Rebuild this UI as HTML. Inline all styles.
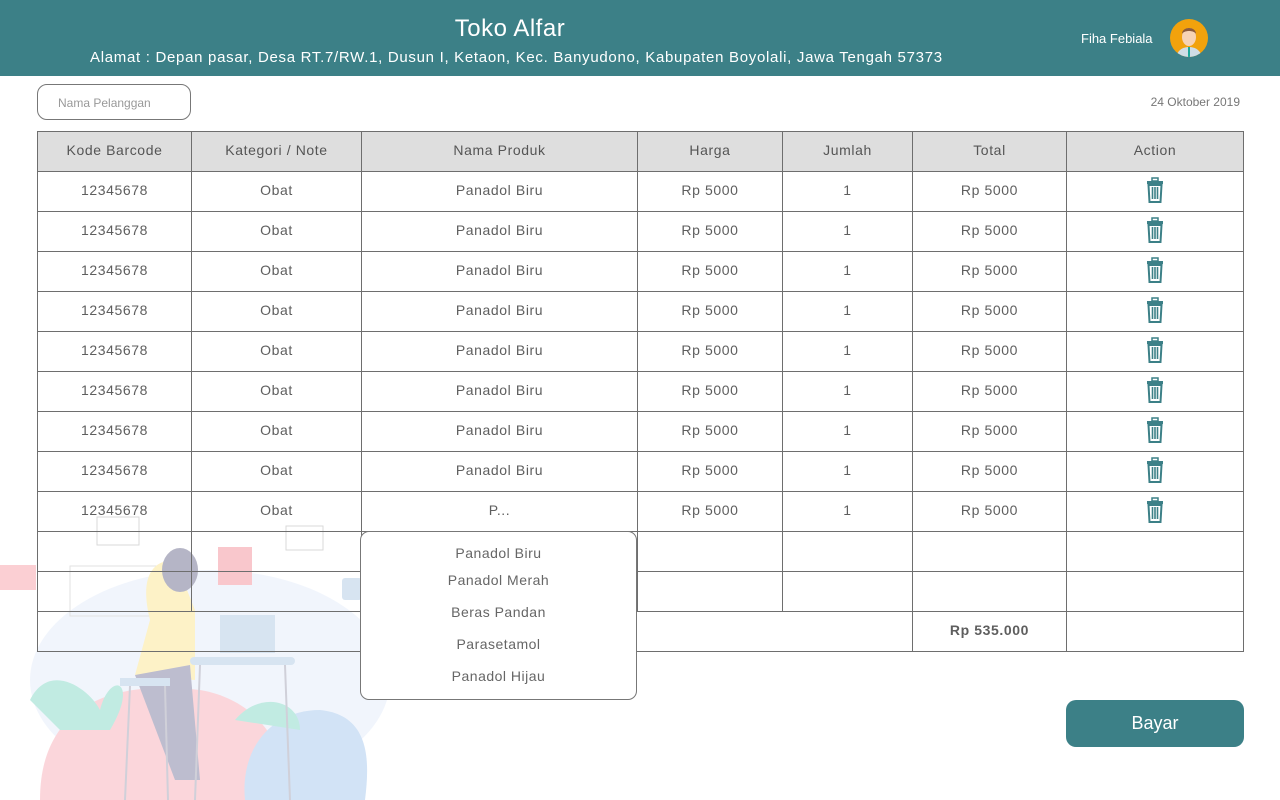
<!DOCTYPE html>
<html><head><meta charset="utf-8"><style>
*{margin:0;padding:0;box-sizing:border-box}
body{width:1280px;height:800px;position:relative;overflow:hidden;background:#fff;font-family:"Liberation Sans",sans-serif;color:#555}
.hdr{position:absolute;left:0;top:0;width:1280px;height:76px;background:#3c8087;color:#fff}
.t{position:absolute;left:0;width:1020px;text-align:center;top:15px;font-size:24px;letter-spacing:0.5px}
.a{position:absolute;left:90px;top:49px;font-size:15px;letter-spacing:0.7px}
.u{position:absolute;left:1081px;top:31px;font-size:13px}
.av{position:absolute;left:1170px;top:19px;width:38px;height:38px;border-radius:50%;background:#f2a20c;overflow:hidden}
.inp{position:absolute;left:37px;top:84px;width:154px;height:36px;border:1px solid #777;border-radius:10px;font-size:12px;color:#999;padding:11px 20px}
.date{position:absolute;right:40px;top:95px;font-size:12px;color:#777}
.c{position:absolute;border:1px solid #6e6e6e;font-size:14px;text-align:center;display:flex;align-items:center;justify-content:center;color:#5e5e5e;letter-spacing:0.6px;padding-bottom:3px}
.h{background:#dedede;color:#555}
.dd{position:absolute;left:360px;top:531px;width:277px;height:169px;border:1px solid #777;border-radius:9px;background:#fff;font-size:14px;color:#666;text-align:center;letter-spacing:0.5px}
.dd div{position:absolute;width:100%}
.bay{position:absolute;left:1066px;top:700px;width:178px;height:47px;border-radius:10px;background:#3c8087;color:#fff;font-size:18px;text-align:center;line-height:47px}
</style></head><body>
<svg style="position:absolute;left:0;top:500px" width="400" height="300" opacity="0.55">
<ellipse cx="210" cy="180" rx="180" ry="110" fill="#e6eefb"/>
<path d="M40 300 C40 200 120 180 200 190 C260 200 290 250 285 300Z" fill="#f9b6be"/>
<path d="M245 300 C240 250 270 210 320 210 C370 215 370 260 365 300Z" fill="#aecdf0"/>
<path d="M30 200 C50 160 90 190 100 210 C110 170 140 180 110 230 L60 230Z" fill="#8fdccc"/>
<path d="M235 220 C260 190 300 200 300 230Z" fill="#8fdccc"/>
<rect x="0" y="65" width="36" height="25" fill="#f9a8b0"/>
<rect x="218" y="47" width="34" height="38" fill="#f59aa4"/>
<rect x="286" y="26" width="37" height="24" fill="none" stroke="#bbb"/>
<rect x="97" y="17" width="42" height="28" fill="none" stroke="#bbb"/>
<rect x="70" y="66" width="90" height="50" fill="none" stroke="#ccc"/>
<path d="M150 120 C140 80 150 60 175 60 L195 110 L195 180 L135 175Z" fill="#fde99a"/>
<path d="M135 175 L190 165 L200 280 L175 280Z" fill="#8888a8"/>
<ellipse cx="180" cy="70" rx="18" ry="22" fill="#7a7a98"/>
<rect x="220" y="115" width="55" height="38" fill="#b8cfe6"/>
<rect x="190" y="157" width="105" height="8" rx="4" fill="#b8cfe6"/>
<rect x="120" y="178" width="50" height="8" fill="#b8cfe6"/>
<path d="M200 165 L195 300 M285 165 L290 300 M130 186 L125 300 M165 186 L168 300" stroke="#aab" stroke-width="2"/>
<rect x="342" y="78" width="20" height="22" rx="3" fill="#b8cfe6"/>
</svg>
<div class="hdr"><div class="t">Toko Alfar</div><div class="a">Alamat : Depan pasar, Desa RT.7/RW.1, Dusun I, Ketaon, Kec. Banyudono, Kabupaten Boyolali, Jawa Tengah 57373</div><div class="u">Fiha Febiala</div>
<div class="av"><svg width="38" height="38"><path d="M6 38 C8 30 14 28 19 28 C24 28 30 30 32 38Z" fill="#cfdde6"/><rect x="18" y="28" width="2" height="10" fill="#1aa89a"/><ellipse cx="19" cy="18" rx="7" ry="9" fill="#f6d3b5"/><path d="M12 15 C12 7 26 7 26 15 C24 11 14 11 12 15Z" fill="#8a5a3c"/></svg></div></div>
<div class="inp">Nama Pelanggan</div><div class="date">24 Oktober 2019</div>
<div id="tb"></div>
<div class="dd"><div style="top:13px">Panadol Biru</div><div style="top:40px">Panadol Merah</div><div style="top:72px">Beras Pandan</div><div style="top:104px">Parasetamol</div><div style="top:136px">Panadol Hijau</div></div>
<div class="bay">Bayar</div>
<script>
var X=[37,191,361,637,782,912,1066,1243],H=["Kode Barcode","Kategori / Note","Nama Produk","Harga","Jumlah","Total","Action"],s="";
var trash='<svg width="18" height="26" viewBox="0 0 18 26"><rect x="6" y="1" width="6" height="3" fill="none" stroke="#3c8087" stroke-width="1.5"/><rect x="1" y="4" width="16" height="3" fill="#3c8087"/><path d="M2.5 8 L3.5 25 L14.5 25 L15.5 8Z" fill="none" stroke="#3c8087" stroke-width="2"/><path d="M6.5 10 V22 M9 10 V22 M11.5 10 V22" stroke="#3c8087" stroke-width="1.6"/></svg>';
function c(x1,x2,y,h,t,cl){s+='<div class="c '+(cl||"")+'" style="left:'+x1+'px;width:'+(x2-x1+1)+'px;top:'+y+'px;height:'+(h+1)+'px">'+t+'</div>';}
for(var i=0;i<7;i++)c(X[i],X[i+1],131,40,H[i],"h");
for(var r=0;r<9;r++){var y=171+r*40;var d=["12345678","Obat",r==8?"P...":"Panadol Biru","Rp 5000","1","Rp 5000",trash];for(i=0;i<7;i++)c(X[i],X[i+1],y,40,d[i]);}
for(r=0;r<2;r++){y=531+r*40;for(i=0;i<7;i++)c(X[i],X[i+1],y,40,"");}
c(37,912,611,40,"");c(912,1066,611,40,"<b>Rp 535.000</b>");c(1066,1243,611,40,"");
document.getElementById("tb").innerHTML=s;
</script>
</body></html>
